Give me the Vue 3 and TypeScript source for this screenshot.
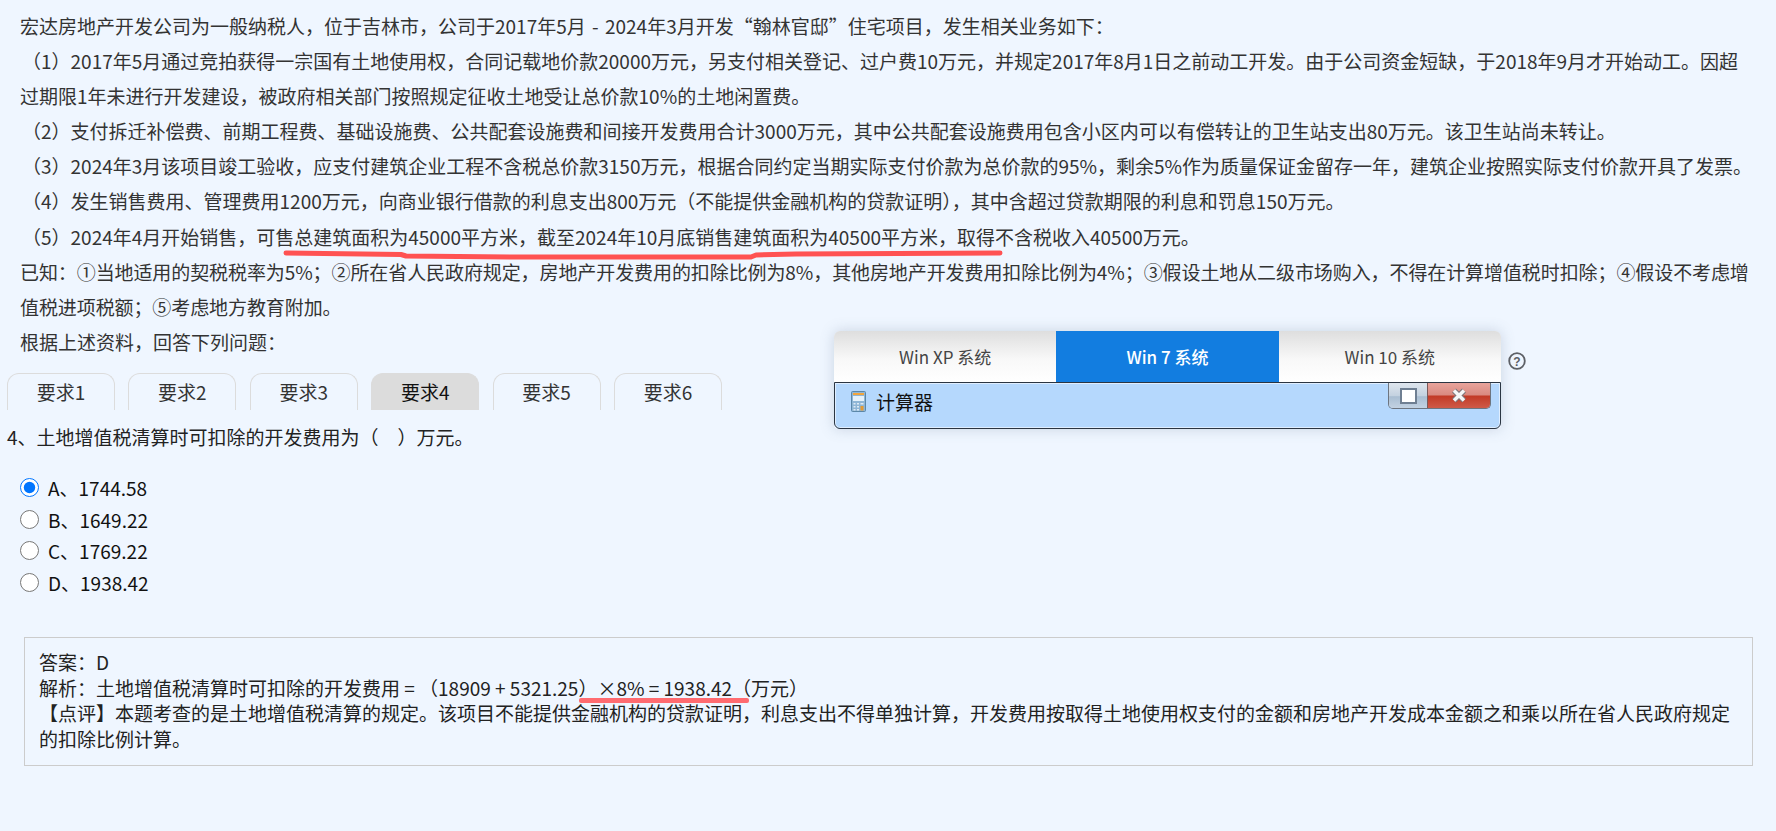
<script setup lang="ts">
const intro: string[] = [
  '宏达房地产开发公司为一般纳税人，位于吉林市，公司于2017年5月\u2004-\u20042024年3月开发“翰林官邸”住宅项目，发生相关业务如下：',
]
const items: string[] = [
  '（1）2017年5月通过竞拍获得一宗国有土地使用权，合同记载地价款20000万元，另支付相关登记、过户费10万元，并规定2017年8月1日之前动工开发。由于公司资金短缺，于2018年9月才开始动工。因超过期限1年未进行开发建设，被政府相关部门按照规定征收土地受让总价款10%的土地闲置费。',
  '（2）支付拆迁补偿费、前期工程费、基础设施费、公共配套设施费和间接开发费用合计3000万元，其中公共配套设施费用包含小区内可以有偿转让的卫生站支出80万元。该卫生站尚未转让。',
  '（3）2024年3月该项目竣工验收，应支付建筑企业工程不含税总价款3150万元，根据合同约定当期实际支付价款为总价款的95%，剩余5%作为质量保证金留存一年，建筑企业按照实际支付价款开具了发票。',
  '（4）发生销售费用、管理费用1200万元，向商业银行借款的利息支出800万元（不能提供金融机构的贷款证明），其中含超过贷款期限的利息和罚息150万元。',
  '（5）2024年4月开始销售，可售总建筑面积为45000平方米，截至2024年10月底销售建筑面积为40500平方米，取得不含税收入40500万元。',
]
const known = '已知：①当地适用的契税税率为5%；②所在省人民政府规定，房地产开发费用的扣除比例为8%，其他房地产开发费用扣除比例为4%；③假设土地从二级市场购入，不得在计算增值税时扣除；④假设不考虑增值税进项税额；⑤考虑地方教育附加。'
const ask = '根据上述资料，回答下列问题：'
const tabs = ['要求1', '要求2', '要求3', '要求4', '要求5', '要求6']
const options = ['A、1744.58', 'B、1649.22', 'C、1769.22', 'D、1938.42']
const systems = ['Win XP 系统', 'Win 7 系统', 'Win 10 系统']
</script>

<template>
  <div class="page">
    <section class="material">
      <p v-for="t in intro" :key="t">{{ t }}</p>
      <p v-for="t in items" :key="t" class="item">{{ t }}</p>
      <p class="known">{{ known }}</p>
      <p>{{ ask }}</p>
    </section>

    <nav class="tabs">
      <div v-for="(t, i) in tabs" :key="t" class="tab" :class="{ active: i === 3 }">{{ t }}</div>
    </nav>

    <h2 class="question">4、土地增值税清算时可扣除的开发费用为（&emsp;）万元。</h2>

    <div class="options">
      <label v-for="(o, i) in options" :key="o" class="option">
        <input type="radio" name="answer" :checked="i === 0" />
        <span>{{ o }}</span>
      </label>
    </div>

    <section class="answer">
      <div>答案：D</div>
      <div>解析：土地增值税清算时可扣除的开发费用 = （18909 + 5321.25）×8% = 1938.42（万元）</div>
      <div>【点评】本题考查的是土地增值税清算的规定。该项目不能提供金融机构的贷款证明，利息支出不得单独计算，开发费用按取得土地使用权支付的金额和房地产开发成本金额之和乘以所在省人民政府规定的扣除比例计算。</div>
    </section>

    <svg class="mark mark-top" width="730" height="12" viewBox="0 0 730 12">
      <path d="M5 4 L120 5.500 L125 7 L230 8 L470 8 L475 6 L515 5 L719 4" fill="none" stroke="#ff5252" stroke-width="5" stroke-linecap="round" stroke-linejoin="round" />
    </svg>
    <div class="mark mark-bottom"></div>

    <aside class="calc">
      <div class="sys-tabs">
        <div v-for="(s, i) in systems" :key="s" class="sys-tab" :class="{ on: i === 1 }">{{ s }}</div>
      </div>
      <div class="titlebar">
        <svg class="calc-icon" width="15" height="21" viewBox="0 0 15 21">
          <rect x="0.5" y="0.5" width="14" height="20" rx="1" fill="#8fb6d6" stroke="#5b87a8" />
          <rect x="2" y="2" width="11" height="2" fill="#f3a53c" />
          <rect x="2" y="5" width="11" height="5" fill="#e6f2fb" />
          <path d="M2.5 12h2v1.5h-2zM6 12h2v1.5H6zM9.5 12h3v1.5h-3zM2.5 15h2v1.5h-2zM6 15h2v1.5H6zM2.5 18h2v1.5h-2zM6 18h2v1.5H6z" fill="#dfeaf3" />
          <path d="M9.5 15h3v4.5h-3z" fill="#e39a34" />
        </svg>
        <span class="title">计算器</span>
        <div class="win-btns">
          <div class="btn-max"><i></i></div>
          <div class="btn-close">
            <svg width="20" height="17" viewBox="0 0 20 17">
              <path d="M5 3.500L15 13.500M15 3.500L5 13.500" stroke="#7d7478" stroke-width="5.500" fill="none" />
              <path d="M5 3.500L15 13.500M15 3.500L5 13.500" stroke="#f6f6f6" stroke-width="3.500" fill="none" />
            </svg>
          </div>
        </div>
      </div>
      <svg class="help" width="18" height="18" viewBox="0 0 18 18">
        <circle cx="9" cy="9" r="7.800" fill="none" stroke="#5d6066" stroke-width="1.800" />
        <text x="9" y="13.500" text-anchor="middle" font-size="12" font-weight="700" fill="#5d6066" font-family="Liberation Sans, sans-serif">?</text>
      </svg>
    </aside>
  </div>
</template>

<style>
html, body { background: #eff6ff; }
</style>

<style scoped>
.page {
  position: relative;
  height: 831px;
  overflow: hidden;
  box-sizing: border-box;
  padding-top: 8px;
  background: #eff6ff;
  color: #333;
  font-family: "Noto Sans CJK SC", "Noto Sans", sans-serif;
  font-size: 19px;
}
.material { padding: 0 20px; line-height: 35.1px; }
.material p { margin: 0; }
.item { text-indent: 2px; }
.known { letter-spacing: -0.09px; }
.tabs { display: flex; gap: 13.4px; margin: 14px 0 0 7px; }
.tab {
  box-sizing: border-box;
  width: 108px;
  height: 37px;
  line-height: 35px;
  text-align: center;
  border: 1px solid #dcdcdc;
  border-bottom: 0;
  border-radius: 12px 12px 0 0;
}
.tab.active { background: #dcdcdc; color: #111; }
.question {
  margin: 12px 0 0 7px;
  font-size: 19px;
  font-weight: 400;
  line-height: 30px;
  color: #222;
}
.options { display: flex; flex-direction: column; margin: 20px 0 0 20px; color: #111; }
.option { display: flex; align-items: center; height: 31.6px; gap: 9px; }
.option input {
  width: 19px;
  height: 19px;
  margin: 0;
  accent-color: #0075ff;
}
.answer {
  box-sizing: border-box;
  margin: 39px 23px 0 24px;
  height: 129px;
  padding: 11px 14px 0;
  border: 1px solid #ccc;
  line-height: 25.5px;
  color: #222;
}
.mark { position: absolute; }
.mark-top { left: 281px; top: 249px; }
.mark-bottom { left: 579px; top: 698px; width: 170px; height: 5px; border-radius: 2px; background: #ff6b70; }
.calc {
  position: absolute;
  left: 834px;
  top: 331px;
  width: 667px;
  height: 98px;
  box-shadow: 0 0 14px rgba(90, 110, 140, 0.25);
  border-radius: 6px 6px 4px 4px;
}
.sys-tabs {
  display: flex;
  height: 51px;
  border-radius: 6px 6px 0 0;
  overflow: hidden;
  background: linear-gradient(#dedede, #f8f8f8 55%, #fff);
}
.sys-tab {
  flex: 1;
  text-align: center;
  line-height: 51px;
  font-size: 17px;
  color: #444;
}
.sys-tab.on { background: #127de0; color: #fff; font-weight: 500; }
.titlebar {
  position: relative;
  box-sizing: border-box;
  height: 47px;
  display: flex;
  align-items: center;
  gap: 10px;
  padding: 0 0 8px 16px;
  background: #b5d8fd;
  border: 1px solid #2b3542;
  border-radius: 0 0 6px 6px;
  box-shadow: inset 0 0 0 1px #dfeeff;
}
.calc-icon { flex: none; }
.title { font-size: 19px; color: #111; }
.win-btns {
  position: absolute;
  right: 9px;
  top: 0;
  display: flex;
  width: 103px;
  height: 26px;
  border: 1px solid #6d7580;
  border-top: 0;
  border-radius: 0 0 5px 5px;
  overflow: hidden;
  box-sizing: border-box;
}
.btn-max {
  width: 38px;
  display: flex;
  align-items: center;
  justify-content: center;
  background: linear-gradient(#dfe6ee, #c4d2e0 50%, #a9bed2 55%, #c3d2e2);
  border-right: 1px solid #7a5a5a;
}
.btn-max i {
  display: block;
  width: 17px;
  height: 16px;
  box-sizing: border-box;
  background: #fff;
  border: 2px solid #6f7f92;
}
.btn-close {
  flex: 1;
  display: flex;
  align-items: center;
  justify-content: center;
  background: linear-gradient(#e8a49c, #d98a80 48%, #c23a26 52%, #cf5a48);
}
.help { position: absolute; left: 674px; top: 21px; }
</style>
